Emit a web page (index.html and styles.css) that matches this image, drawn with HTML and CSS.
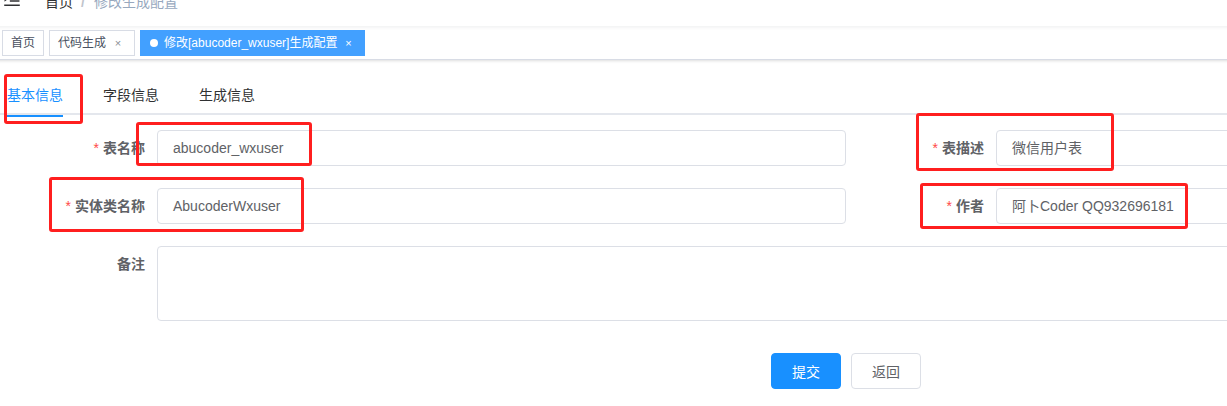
FILE: index.html
```html
<!DOCTYPE html>
<html lang="zh">
<head>
<meta charset="utf-8">
<title>修改生成配置</title>
<link rel="stylesheet" href="styles.css">
</head>
<body>
<div class="page">
  <div class="navbar">
    <div class="hamburger">
      <svg viewBox="0 0 1024 1024" width="20" height="20"><path fill="#303133" d="M408 442h480c4.4 0 8-3.6 8-8v-56c0-4.4-3.6-8-8-8H408c-4.4 0-8 3.6-8 8v56c0 4.4 3.6 8 8 8zm-8 204c0 4.4 3.6 8 8 8h480c4.4 0 8-3.6 8-8v-56c0-4.4-3.6-8-8-8H408c-4.4 0-8 3.6-8 8v56zm504-486H120c-4.4 0-8 3.6-8 8v56c0 4.4 3.6 8 8 8h784c4.4 0 8-3.6 8-8v-56c0-4.4-3.6-8-8-8zm0 632H120c-4.4 0-8 3.6-8 8v56c0 4.4 3.6 8 8 8h784c4.4 0 8-3.6 8-8v-56c0-4.4-3.6-8-8-8zM142.4 642.1L298.7 519a8.840 8.840 0 0 0 0-13.900L142.4 381.900c-5.800-4.600-14.400-.5-14.400 6.900v246.300a8.800 8.800 0 0 0 14.400 7z"/></svg>
    </div>
    <div class="breadcrumb"><span class="crumb">首页</span><span class="sep">/</span><span class="crumb last">修改生成配置</span></div>
  </div>
  <div class="tags-view">
    <span class="tag">首页</span>
    <span class="tag">代码生成<span class="close">×</span></span>
    <span class="tag active"><span class="dot"></span>修改[abucoder_wxuser]生成配置<span class="close">×</span></span>
  </div>
  <div class="app-container">
    <div class="tabs-header">
      <div class="tab active">基本信息</div>
      <div class="tab">字段信息</div>
      <div class="tab">生成信息</div>
    </div>
    <div class="form">
      <div class="row">
        <div class="item">
          <label class="label"><span class="req">*</span>表名称</label>
          <div class="input">abucoder_wxuser</div>
        </div>
        <div class="item">
          <label class="label"><span class="req">*</span>表描述</label>
          <div class="input">微信用户表</div>
        </div>
      </div>
      <div class="row">
        <div class="item">
          <label class="label"><span class="req">*</span>实体类名称</label>
          <div class="input">AbucoderWxuser</div>
        </div>
        <div class="item">
          <label class="label"><span class="req">*</span>作者</label>
          <div class="input">阿卜Coder QQ932696181</div>
        </div>
      </div>
      <div class="row">
        <div class="item full">
          <label class="label">备注</label>
          <div class="input textarea"></div>
        </div>
      </div>
    </div>
    <div class="actions">
      <button class="btn primary">提交</button>
      <button class="btn">返回</button>
    </div>
  </div>
</div>
<div class="mark m1"></div>
<div class="mark m2"></div>
<div class="mark m3"></div>
<div class="mark m4"></div>
<div class="mark m5"></div>
</body>
</html>
```

FILE: styles.css
```css
* { box-sizing: border-box; }
html, body {
  margin: 0;
  padding: 0;
  overflow: hidden;
  background: #fff;
}
body {
  position: relative;
  width: 1227px;
  height: 406px;
  font-family: "Liberation Sans", "Noto Sans CJK SC", sans-serif;
  font-size: 14px;
  color: #606266;
}
.page {
  margin: -24px 0 0 -13px;
  width: 1720px;
}
.navbar {
  height: 50px;
  display: flex;
  align-items: stretch;
  background: #fff;
  box-shadow: 0 1px 4px rgba(0, 21, 41, 0.08);
  position: relative;
  z-index: 2;
}
.hamburger {
  padding: 13px 15px 0;
  height: 50px;
}
.hamburger svg { display: block; }
.breadcrumb {
  margin-left: 8px;
  line-height: 52px;
  font-size: 14px;
  display: flex;
}
.crumb { color: #303133; }
.crumb.last { color: #97a8be; }
.sep {
  margin: 0 9px 0 8px;
  color: #c0c4cc;
  font-weight: 700;
}
.tags-view {
  height: 34px;
  background: #fff;
  border-bottom: 1px solid #d8dce5;
  box-shadow: 0 1px 3px 0 rgba(0, 0, 0, 0.12), 0 0 3px 0 rgba(0, 0, 0, 0.04);
  display: flex;
  align-items: flex-start;
  gap: 5px;
  padding: 4px 0 0 15px;
}
.tag {
  height: 26px;
  line-height: 24px;
  border: 1px solid #d8dce5;
  color: #495060;
  background: #fff;
  padding: 0 8px;
  font-size: 12px;
  display: flex;
  align-items: center;
}
.tag .close {
  width: 16px;
  margin-left: 4px;
  text-align: center;
  font-size: 11px;
  color: #8c8f96;
}
.tag.active {
  background: #42a0ff;
  border-color: #42a0ff;
  color: #fff;
  padding: 0 8px 0 9px;
}
.tag.active .close { color: #fff; margin-left: 3px; }
.dot {
  width: 8px;
  height: 8px;
  border-radius: 50%;
  background: #fff;
  margin-right: 6px;
}
.app-container {
  padding: 15px 20px 20px;
}
.tabs-header {
  display: flex;
  height: 40px;
  margin-bottom: 15px;
  border-bottom: 2px solid #e4e7ed;
  margin-left: -20px;
  padding-left: 20px;
}
.tab {
  height: 40px;
  line-height: 40px;
  padding: 0 20px;
  color: #303133;
  font-size: 14px;
}
.tab:first-child { padding-left: 0; }
.tab.active {
  color: #1890ff;
  position: relative;
}
.tab.active::after {
  content: "";
  position: absolute;
  left: 0;
  right: 20px;
  bottom: -2px;
  height: 2px;
  background: #1890ff;
}
.form { width: 1678px; }
.row { display: flex; }
.item {
  width: 839px;
  display: flex;
  margin-bottom: 22px;
}
.item.full { width: 1678px; }
.label {
  width: 150px;
  flex: none;
  text-align: right;
  padding-right: 12px;
  line-height: 36px;
  font-weight: 700;
  color: #606266;
}
.req {
  color: #ff4949;
  margin-right: 4px;
  font-weight: 400;
}
.input {
  flex: 1;
  height: 36px;
  line-height: 34px;
  border: 1px solid #dcdfe6;
  border-radius: 4px;
  padding: 0 15px;
  color: #606266;
  background: #fff;
}
.input.textarea { height: 75px; }
.actions {
  width: 1678px;
  margin-top: 10px;
  display: flex;
  justify-content: center;
  gap: 10px;
}
.btn {
  width: 70px;
  height: 36px;
  border: 1px solid #dcdfe6;
  border-radius: 4px;
  background: #fff;
  color: #606266;
  font-family: inherit;
  font-size: 14px;
  padding: 0;
}
.btn.primary {
  background: #1890ff;
  border-color: #1890ff;
  color: #fff;
}
.mark {
  position: absolute;
  border: 3px solid #ff1f1f;
  border-radius: 3px;
}
.m1 { left: 4px; top: 74px; width: 79px; height: 50px; }
.m2 { left: 136px; top: 122px; width: 176px; height: 44px; }
.m3 { left: 49px; top: 177px; width: 255px; height: 55px; }
.m4 { left: 916px; top: 113px; width: 198px; height: 58px; }
.m5 { left: 920px; top: 183px; width: 268px; height: 46px; }
```
